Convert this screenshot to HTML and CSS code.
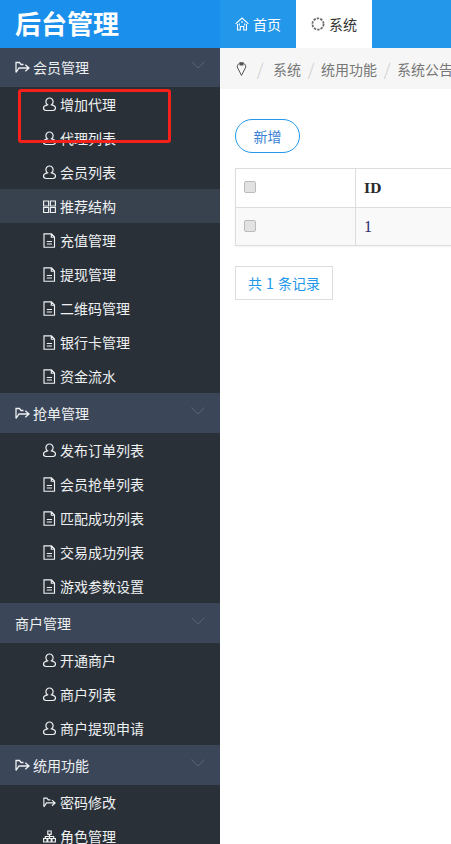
FILE: index.html
```html
<!DOCTYPE html>
<html lang="zh-CN">
<head>
<meta charset="utf-8">
<title>后台管理</title>
<link rel="stylesheet" href="styles.css">
</head>
<body>
<svg class="defs" width="0" height="0" aria-hidden="true">
  <symbol id="i-user" viewBox="0 0 13 15"><path stroke-width="1.200" d="M6.500 1a3.600 3.600 0 0 1 3.600 3.700c0 1.300-.6 2.400-1.500 3.100 2.300.5 3.900 1.500 3.900 3.300 0 1.500-1 2.400-2.500 2.400h-7C1.500 13.500.500 12.600.500 11.100c0-1.800 1.600-2.800 3.900-3.300-.9-.7-1.500-1.800-1.500-3.100A3.600 3.600 0 0 1 6.500 1z"/></symbol>
  <symbol id="i-folder" viewBox="0 0 15 13"><path stroke-width="1.300" d="M1 11.500V1.500h3.500L6 3.500h2.500M1 11.500 4 7h9.500M10.300 3.800 14 7l-3.700 3.200"/></symbol>
  <symbol id="i-file" viewBox="0 0 13 15"><path stroke-width="1.150" d="M1 .8h7.500l3 3.200v10.200H1zM8.300.8v3.400h3.200M3.800 8.500h5.200M3.800 11h5.200"/></symbol>
  <symbol id="i-grid" viewBox="0 0 13 15"><path stroke-width="1.150" d="M.6 2h5v5h-5zM7.400 2h5v5h-5zM.6 8.500h5v5h-5zM7.400 8.500h5v5h-5z"/></symbol>
  <symbol id="i-tree" viewBox="0 0 13 15"><path stroke-width="1.150" d="M4.800 2h3.400v3.400H4.800zM.6 9.500H4V13H.6zM4.800 9.500h3.400V13H4.800zM9 9.500h3.400V13H9zM2.300 9.500V7.500h8.400v2M6.500 5.400v4.100"/></symbol>
  <symbol id="i-home" viewBox="0 0 14 14"><path stroke-width="1.100" d="M.6 6.800 7 1l6.400 5.800M2.500 7v6h2.800V9.500h3.400V13h2.800V7M7 4v2M4.300 6.500v2M9.700 6.500v2"/></symbol>
  <symbol id="i-gear" viewBox="0 0 14 14"><circle cx="7" cy="7" r="5.600" stroke-width="1.700" stroke-dasharray="2.400 1.100"/></symbol>
  <symbol id="i-pin" viewBox="0 0 11 15"><path d="M5.500 14.500 1.200 6A4.300 4.300 0 1 1 9.800 6z"/><path d="M3.500 3h4" stroke-width="3"/></symbol>
  <symbol id="i-chev" viewBox="0 0 14 8"><path d="M.5.500 7 7 13.500.500"/></symbol>
</svg>

<div class="page">
  <header class="topbar">
    <div class="logo">后台管理</div>
    <nav class="tabs">
      <a class="tab"><svg class="ico ico-tab"><use href="#i-home"/></svg>首页</a>
      <a class="tab tab-active"><svg class="ico ico-tab ico-gear"><use href="#i-gear"/></svg>系统</a>
    </nav>
  </header>

  <div class="body">
    <aside class="sidebar">
      <section>
        <div class="group group-first"><span class="group-label"><svg class="ico ico-group"><use href="#i-folder"/></svg>会员管理</span><svg class="chev"><use href="#i-chev"/></svg></div>
        <a class="item"><svg class="ico ico-item"><use href="#i-user"/></svg>增加代理</a>
        <a class="item"><svg class="ico ico-item"><use href="#i-user"/></svg>代理列表</a>
        <a class="item"><svg class="ico ico-item"><use href="#i-user"/></svg>会员列表</a>
        <a class="item item-active"><svg class="ico ico-item"><use href="#i-grid"/></svg>推荐结构</a>
        <a class="item"><svg class="ico ico-item"><use href="#i-file"/></svg>充值管理</a>
        <a class="item"><svg class="ico ico-item"><use href="#i-file"/></svg>提现管理</a>
        <a class="item"><svg class="ico ico-item"><use href="#i-file"/></svg>二维码管理</a>
        <a class="item"><svg class="ico ico-item"><use href="#i-file"/></svg>银行卡管理</a>
        <a class="item"><svg class="ico ico-item"><use href="#i-file"/></svg>资金流水</a>
      </section>
      <section>
        <div class="group"><span class="group-label"><svg class="ico ico-group"><use href="#i-folder"/></svg>抢单管理</span><svg class="chev"><use href="#i-chev"/></svg></div>
        <a class="item"><svg class="ico ico-item"><use href="#i-user"/></svg>发布订单列表</a>
        <a class="item"><svg class="ico ico-item"><use href="#i-file"/></svg>会员抢单列表</a>
        <a class="item"><svg class="ico ico-item"><use href="#i-file"/></svg>匹配成功列表</a>
        <a class="item"><svg class="ico ico-item"><use href="#i-file"/></svg>交易成功列表</a>
        <a class="item"><svg class="ico ico-item"><use href="#i-file"/></svg>游戏参数设置</a>
      </section>
      <section>
        <div class="group"><span class="group-label">商户管理</span><svg class="chev"><use href="#i-chev"/></svg></div>
        <a class="item"><svg class="ico ico-item"><use href="#i-user"/></svg>开通商户</a>
        <a class="item"><svg class="ico ico-item"><use href="#i-user"/></svg>商户列表</a>
        <a class="item"><svg class="ico ico-item"><use href="#i-user"/></svg>商户提现申请</a>
      </section>
      <section>
        <div class="group"><span class="group-label"><svg class="ico ico-group"><use href="#i-folder"/></svg>统用功能</span><svg class="chev"><use href="#i-chev"/></svg></div>
        <a class="item"><svg class="ico ico-item"><use href="#i-folder"/></svg>密码修改</a>
        <a class="item"><svg class="ico ico-item"><use href="#i-tree"/></svg>角色管理</a>
      </section>
    </aside>

    <main class="main">
      <div class="crumbs">
        <svg class="ico ico-pin"><use href="#i-pin"/></svg>
        <span class="sep sep-first">/</span><span class="crumb">系统</span>
        <span class="sep">/</span><span class="crumb">统用功能</span>
        <span class="sep">/</span><span class="crumb">系统公告</span>
      </div>
      <div class="content">
        <button class="btn-add" type="button">新增</button>
        <table class="grid">
          <thead>
            <tr><th class="col-check"><input class="check" type="checkbox"></th><th class="col-id">ID</th></tr>
          </thead>
          <tbody>
            <tr><td class="col-check"><input class="check" type="checkbox"></td><td class="col-id">1</td></tr>
          </tbody>
        </table>
        <div class="pager">共 1 条记录</div>
      </div>
    </main>
  </div>

  <div class="highlight"></div>
</div>
</body>
</html>
```
FILE: styles.css
```css
* { box-sizing: border-box; }
html, body { margin: 0; height: 100%; overflow: hidden; }
body {
  background: #fff;
  font-family: "Noto Sans CJK SC", "Noto Sans", sans-serif;
  font-size: 14px;
  color: #333;
}
.defs { position: absolute; }
.page { position: relative; width: 451px; height: 844px; overflow: hidden; }

.ico { fill: none; stroke: currentColor; stroke-width: 1; flex: none; }

/* top bar */
.topbar { display: flex; height: 48px; background: #2397ea; }
.logo {
  width: 220px;
  padding-left: 15px;
  background: #1a8fec;
  color: #fff;
  font-size: 26px;
  font-weight: 700;
  line-height: 46px;
}
.tabs { display: flex; }
.tab {
  display: flex;
  align-items: center;
  justify-content: center;
  gap: 4px;
  width: 76px;
  color: #fff;
}
.tab-active { background: #fff; color: #333; }
.ico-tab { width: 14px; height: 14px; }
.ico-gear { color: #666; }

/* layout */
.body { display: flex; height: 796px; }

/* sidebar */
.sidebar { width: 220px; flex: none; background: #2a3038; color: #eef0f2; overflow: hidden; }
.group {
  display: flex;
  align-items: center;
  justify-content: space-between;
  height: 40px;
  padding: 0 15px;
  background: #3b4658;
}
.group-first { height: 39px; padding-bottom: 1px; }
.group-label { display: flex; align-items: center; gap: 3px; }
.ico-group { width: 15px; height: 13px; }
.chev { width: 14px; height: 8px; margin-bottom: 4px; fill: none; stroke: #586272; stroke-width: 1; }
.item {
  display: flex;
  align-items: center;
  gap: 4px;
  height: 34px;
  padding-left: 43px;
}
.item-active { background: #38424e; }
.ico-item { width: 13px; height: 15px; }

/* main */
.main { flex: 1; min-width: 0; overflow: hidden; }
.crumbs {
  display: flex;
  align-items: center;
  height: 41px;
  padding-left: 16px;
  background: #f6f6f6;
  color: #777;
  white-space: nowrap;
}
.crumb { flex: none; }
.ico-pin { width: 11px; height: 15px; color: #555; margin-bottom: 1px; }
.sep { flex: none; width: 20px; text-align: center; color: #ccc; font-size: 17px; font-weight: 300; }
.sep-first { width: 26px; }
.content { padding: 30px 0 0 15px; }
.btn-add {
  display: block;
  width: 65px;
  height: 34px;
  padding: 0;
  border: 1px solid #2397ea;
  border-radius: 17px;
  background: #fff;
  color: #3a7fd4;
  font: inherit;
}
.grid {
  width: 300px;
  margin-top: 15px;
  border-collapse: collapse;
  table-layout: fixed;
  box-shadow: 0 1px 2px rgba(0, 0, 0, .05);
}
.grid th, .grid td { border: 1px solid #ddd; padding: 0 8px; text-align: left; }
.grid th { height: 39px; background: #fff; }
.grid td { height: 38px; background: #f9f9f9; color: #2a2a6a; }
.col-check { width: 120px; }
.col-id { font-family: "Liberation Serif", serif; font-size: 16px; }
.grid th.col-id { font-family: "DejaVu Serif", serif; font-size: 13px; color: #2b2b2b; }
.grid th.col-check { padding-bottom: 3px; }
.grid td.col-check { padding-bottom: 1px; }
.check {
  appearance: none;
  display: block;
  width: 12px;
  height: 12px;
  margin: 0;
  border: 1px solid #bbb;
  border-radius: 2px;
  background: #e2e2e2;
}
.pager {
  display: flex;
  align-items: center;
  justify-content: center;
  width: 98px;
  height: 34px;
  margin-top: 20px;
  border: 1px solid #ddd;
  color: #2397ea;
  word-spacing: 1px;
}

/* annotation */
.highlight {
  position: absolute;
  left: 18px;
  top: 89px;
  width: 153px;
  height: 54px;
  border: 3px solid #f5211a;
  border-radius: 3px;
}
```
